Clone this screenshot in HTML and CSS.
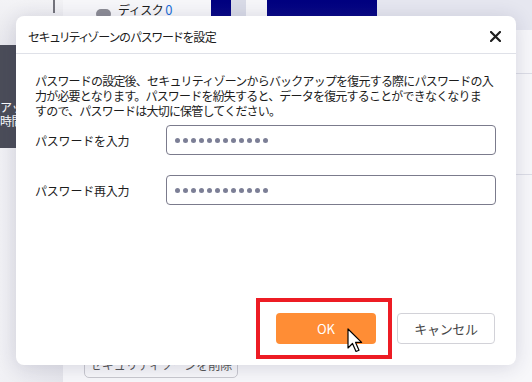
FILE: index.html
```html
<!DOCTYPE html>
<html lang="ja">
<head>
<meta charset="utf-8">
<title>セキュリティゾーンのパスワードを設定</title>
<link rel="stylesheet" href="styles.css">
</head>
<body>
<div class="app">
  <aside class="sidebar">
    <div class="side-top"><span class="scroll-thumb"></span></div>
    <div class="side-item"><span>アップ</span><span>時間</span></div>
    <div class="side-rest"></div>
  </aside>
  <main class="main">
    <section class="card">
      <div class="disk-row">
        <span class="disk-icon"></span>
        <span class="disk-label">ディスク <b class="disk-num">0</b></span>
        <div class="disk-map">
          <span class="seg navy w20"></span>
          <span class="seg pale w15"></span>
          <span class="seg white w21"></span>
          <span class="seg navy w110"></span>
          <span class="seg rest"></span>
        </div>
      </div>
      <div class="card-row"></div>
      <div class="card-fill"></div>
      <div class="card-footer"><button class="ghost-btn">セキュリティゾーンを削除</button></div>
    </section>
  </main>
</div>

<div class="modal">
  <div class="modal-header">
    <span class="modal-title">セキュリティゾーンのパスワードを設定</span>
    <svg class="close" width="11" height="11" viewBox="0 0 11 11"><path d="M1 1 L10 10 M10 1 L1 10" stroke="#1e1e1e" stroke-width="2.2" stroke-linecap="round" fill="none"/></svg>
  </div>
  <div class="modal-body">
    <p class="desc"><span class="ln">パスワードの設定後、セキュリティゾーンからバックアップを復元する際にパスワードの入</span><span class="ln">力が必要となります。パスワードを紛失すると、データを復元することができなくなりま</span><span class="ln">すので、パスワードは大切に保管してください。</span></p>
    <div class="field">
      <label class="field-label">パスワードを入力</label>
      <div class="pw"><i></i><i></i><i></i><i></i><i></i><i></i><i></i><i></i><i></i><i></i><i></i><i></i></div>
    </div>
    <div class="field">
      <label class="field-label">パスワード再入力</label>
      <div class="pw"><i></i><i></i><i></i><i></i><i></i><i></i><i></i><i></i><i></i><i></i><i></i><i></i></div>
    </div>
  </div>
  <div class="modal-footer">
    <button class="btn btn-ok">OK</button>
    <button class="btn btn-cancel">キャンセル</button>
  </div>
</div>

<div class="highlight"></div>
<svg class="cursor" width="16" height="26" viewBox="0 0 16 26">
  <path d="M1 1 L1 20 L5.5 15.5 L9 23.5 L12 22.2 L8.6 14.4 L14.6 14.4 Z" fill="#fff" stroke="#000" stroke-width="1.2" stroke-linejoin="round"/>
</svg>
</body>
</html>
```

FILE: styles.css
```css
* { box-sizing: border-box; }
html, body { margin: 0; padding: 0; }
body {
  width: 532px;
  height: 382px;
  overflow: hidden;
  position: relative;
  font-family: "Noto Sans CJK JP", "Noto Sans", sans-serif;
  background: #f1f1f5;
  color: #1c1c1c;
}

/* background application */
.app { display: flex; height: 382px; }
.sidebar { width: 63px; display: flex; flex-direction: column; background: #ececf1; }
.side-top { height: 45px; display: flex; justify-content: flex-end; align-items: flex-start; padding-right: 8px; background: linear-gradient(#f3f3f6, #e9e9ee); }
.scroll-thumb { width: 2px; height: 13px; background: #74747c; }
.side-item {
  height: 103px;
  background: #4b4d59;
  color: #fff;
  font-size: 12px;
  line-height: 14px;
  padding-top: 55px;
  display: flex;
  flex-direction: column;
  white-space: nowrap;
  letter-spacing: -0.6px;
}
.side-rest { flex: 1; background: linear-gradient(90deg, #f1f1f5, #e6e6ec); }

.main { flex: 1; display: flex; background: #f4f4f7; }
.card { flex: 1; display: flex; flex-direction: column; background: #f7f7fa; padding-left: 21px; }
.disk-row { height: 74px; display: flex; align-items: flex-start; border-bottom: 1px solid #dcdde6; }
.disk-icon { flex: none; width: 15px; height: 10px; border-radius: 5px; background: #8d8d96; margin: 9px 0 0 12px; }
.disk-label {
  flex: none;
  width: 93px;
  font-size: 12px;
  line-height: 16px;
  margin: 2px 0 0 7px;
  white-space: nowrap;
  color: #1c1c1c;
  letter-spacing: -0.5px;
}
.disk-num { font-weight: normal; font-size: 13px; color: #1e6fd8; }
.disk-map { display: flex; height: 30px; flex: 1; }
.seg { height: 30px; }
.navy { background: linear-gradient(#000080, #0a0a86 60%, #1c1c90); }
.pale { background: #d9dbe7; }
.white { background: #f6f6f9; }
.rest { flex: 1; background: #e6e7f0; }
.w20 { width: 20px; }
.w15 { width: 15px; }
.w21 { width: 21px; }
.w110 { width: 110px; }
.card-row { height: 101px; border-bottom: 1px solid #dcdde6; }
.card-fill { flex: 1; }
.card-footer { padding-bottom: 4px; }
.ghost-btn {
  width: 154px;
  height: 28px;
  border: 1px solid #c8c8cf;
  border-radius: 5px;
  background: #f7f7fa;
  color: #555;
  font-family: inherit;
  font-size: 12px;
  padding: 0;
}

/* modal */
.modal {
  position: absolute;
  left: 16px;
  top: 16px;
  width: 500px;
  height: 349px;
  background: #fff;
  border-radius: 8px;
  box-shadow: 0 2px 20px rgba(40, 40, 80, 0.16);
  display: flex;
  flex-direction: column;
}
.modal-header {
  height: 38px;
  border-bottom: 1px solid #dfe1e8;
  display: flex;
  align-items: center;
  justify-content: space-between;
  padding: 3px 15px 0 12px;
}
.modal-title { font-size: 12px; color: #1c1c1c; white-space: nowrap; font-feature-settings: "palt"; letter-spacing: -0.4px; }
.close { display: block; }
.modal-body { flex: 1; padding: 19px 20px 0 19px; }
.desc { margin: 0 0 7px; font-size: 12px; line-height: 15px; color: #1c1c1c; letter-spacing: -0.8px; }
.ln { display: block; white-space: nowrap; height: 15px; }
.field { display: grid; grid-template-columns: 131px 1fr; align-items: center; margin-bottom: 20px; }
.field-label { font-size: 12px; color: #1c1c1c; white-space: nowrap; letter-spacing: -0.2px; }
.pw {
  height: 30px;
  border: 1px solid #7b7b8c;
  border-radius: 4px;
  display: flex;
  align-items: center;
  gap: 3px;
  padding-left: 8px;
}
.pw i { width: 5px; height: 5px; border-radius: 50%; background: #7c7f96; }
.modal-footer { display: flex; justify-content: flex-end; gap: 21px; padding: 0 21px 21px 0; }
.btn { height: 31px; border-radius: 4px; font-family: inherit; font-size: 13px; padding: 0; }
.btn-ok { width: 100px; border: none; background: #ff8d35; color: #fff; }
.btn-cancel { width: 98px; border: 1px solid #d2d2d8; background: #fff; color: #454545; letter-spacing: -0.3px; }

/* annotation overlay */
.highlight {
  position: absolute;
  left: 256px;
  top: 298px;
  width: 136px;
  height: 61px;
  border: 4px solid #ed1c24;
}
.cursor { position: absolute; left: 347px; top: 328px; }
```
